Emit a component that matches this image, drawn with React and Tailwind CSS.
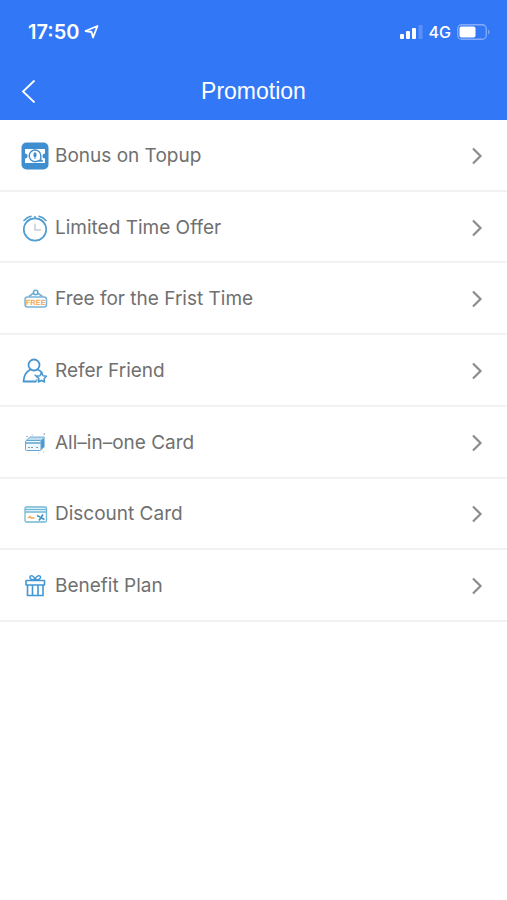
import React from "react";

const BLUE = "#3f8fd0";

function BonusIcon() {
  return (
    <svg viewBox="0 0 28 28" className="size-7" fill="none" aria-hidden="true">
      <rect x="0.5" y="0.5" width="27" height="27" rx="5" fill={BLUE} />
      <path d="M4 7H24V11.5A2.5 2.5 0 0 0 24 16.500V21H4V16.500A2.500 2.500 0 0 0 4 11.500Z" fill="#fff" />
      <path d="M16.500 19A5.800 5.800 0 1 1 19.800 14V17.500L17.500 18.800L22 19" stroke={BLUE} strokeWidth="1.400" />
      <rect x="12.500" y="11" width="3" height="4" rx="1" fill={BLUE} />
      <path d="M14 10V17" stroke={BLUE} strokeWidth="1" />
    </svg>
  );
}

function ClockIcon() {
  return (
    <svg viewBox="0 0 28 28" className="size-7" fill="none" stroke="#529dd2" strokeLinecap="round" aria-hidden="true">
      <circle cx="14" cy="15.500" r="11.200" strokeWidth="1.700" />
      <path d="M3 6.500Q6 3 10 2.200M25 6.500Q22 3 18 2.200M14 2.500V4" strokeWidth="1.600" />
      <path d="M5.500 7.500L10 4.500M22.500 7.500L18 4.500" strokeWidth="1.200" />
      <path d="M14 10.500V16H19.500" stroke="#c3ccd5" strokeWidth="1.500" />
    </svg>
  );
}

function FreeIcon() {
  return (
    <svg viewBox="0 0 28 28" className="size-7" fill="none" aria-hidden="true">
      <rect x="4" y="12" width="21.500" height="10" rx="2.500" stroke="#79b2d8" strokeWidth="1.500" />
      <path d="M8 11.500L14.500 6.500L21.500 11.500" stroke="#79b2d8" strokeWidth="1.700" />
      <circle cx="14.700" cy="7.500" r="2.200" fill="#fff" stroke="#65a8d4" strokeWidth="1.500" />
      <text x="14.700" y="20" textAnchor="middle" fontSize="7.500" fontWeight="700" textRendering="geometricPrecision" fill="#eba95b" className="font-['Liberation_Sans',sans-serif]">FREE</text>
    </svg>
  );
}

function FriendIcon() {
  return (
    <svg viewBox="0 0 28 28" className="size-7" fill="none" stroke="#4796d1" strokeLinejoin="round" strokeLinecap="round" aria-hidden="true">
      <circle cx="13" cy="8" r="5.500" strokeWidth="1.800" />
      <path d="M9.500 12.500C5.500 14.500 3 18 2.500 24.500H15M16.500 12.500C18.500 13.300 20 14.500 21 16" strokeWidth="1.800" />
      <path d="M20.500 15.500L22 18.700L25.500 19.200L23 21.700L23.600 25L20.500 23.500L17.400 25L18 21.700L15.500 19.200L19 18.700Z" strokeWidth="1.400" />
      <path d="M14 18L16 20M15 23H17" strokeWidth="1.200" />
    </svg>
  );
}

function CardsIcon() {
  return (
    <svg viewBox="0 0 28 28" className="size-7" fill="none" aria-hidden="true">
      <path d="M20 11.500L23.500 8.500V18L20 21Z" fill="#4a99d0" />
      <path d="M5 11.500L9 8H23.500L20 11.500Z" fill="#bcddf0" stroke="#75b2da" />
      <rect x="4.500" y="11.500" width="15.500" height="10" rx="1" fill="#eff8fc" stroke="#65a7d4" />
      <path d="M5 14H20" stroke="#75b2da" strokeWidth="1.800" />
      <path d="M7 18.500H13M15 18.500H18" stroke="#7f9bad" strokeDasharray="2 1" />
      <path d="M22 5H23M23.500 4V6M5 7.500H7M11 6H12M17 24H18M22 23H23" stroke="#b6bac8" />
    </svg>
  );
}

function DiscountIcon() {
  return (
    <svg viewBox="0 0 28 28" className="size-7" fill="none" aria-hidden="true">
      <rect x="4" y="7" width="21.500" height="15" rx="1.500" fill="#fff" stroke="#70b7d7" strokeWidth="1.300" />
      <path d="M4 9.500H25.500M4 12H25.500" stroke="#70b7d7" strokeWidth="1.300" />
      <path d="M7 18L9 16.500L10 18H13.500" stroke="#eba95b" strokeWidth="1.400" />
      <path d="M22 14.500L18 20.500M16 15.500L19 17M20.500 18L23.500 19.500" stroke="#4594c7" strokeWidth="1.700" />
    </svg>
  );
}

function GiftIcon() {
  return (
    <svg viewBox="0 0 28 28" className="size-7" fill="none" stroke="#4296d4" aria-hidden="true">
      <rect x="5" y="8.500" width="18.500" height="4.500" rx="0.500" strokeWidth="1.600" />
      <path d="M6.500 13V23.500H22V13M11.500 13V23M17 13V23" strokeWidth="1.600" />
      <path d="M14 8C10 8 8.500 6.500 9 4.800S13 3 14 8C15 3 19 3 19.500 4.800S18 8 14 8Z" strokeWidth="1.500" />
    </svg>
  );
}

const items = [
  { label: "Bonus on Topup", Icon: BonusIcon },
  { label: "Limited Time Offer", Icon: ClockIcon },
  { label: "Free for the Frist Time", Icon: FreeIcon },
  { label: "Refer Friend", Icon: FriendIcon },
  { label: "All–in–one Card", Icon: CardsIcon },
  { label: "Discount Card", Icon: DiscountIcon },
  { label: "Benefit Plan", Icon: GiftIcon },
];

function StatusBar() {
  return (
    <div className="flex h-16 items-center justify-between pr-4 pl-7 font-['Inter',sans-serif]">
      <div className="flex items-center gap-1">
        <span className="text-[20px] leading-6 font-semibold">17:50</span>
        <svg viewBox="0 0 16 16" className="size-4" fill="none" stroke="currentColor" strokeWidth="1.800" strokeLinejoin="round" aria-hidden="true">
          <path d="M14.500 2L10 13.500L8.500 8L2.500 7Z" />
        </svg>
      </div>
      <div className="flex items-center gap-1.5">
        <svg viewBox="0 0 24 14" className="h-3.5 w-6" fill="currentColor" aria-hidden="true">
          <rect x="1" y="9" width="4" height="5" rx="1" />
          <rect x="7" y="6" width="4" height="8" rx="1" />
          <rect x="13" y="3" width="4" height="11" rx="1" />
          <rect x="19.500" y="0" width="4" height="14" rx="1" opacity="0.200" />
        </svg>
        <span className="text-[16px] leading-5 font-medium">4G</span>
        <svg viewBox="0 0 34 16" className="h-4 w-[34px]" fill="none" aria-hidden="true">
          <rect x="0.750" y="0.750" width="28.500" height="14.500" rx="4" stroke="#fff" strokeWidth="1.300" opacity="0.400" />
          <rect x="2.500" y="2.500" width="16" height="11" rx="2" fill="#fff" />
          <path d="M31 5.500Q34 8 31 10.500Z" fill="#fff" opacity="0.400" />
        </svg>
      </div>
    </div>
  );
}

export default function App() {
  return (
    <div className="min-h-screen bg-white font-['Inter',sans-serif]">
      <header className="h-[120px] bg-[#3277f6] text-white">
        <StatusBar />
        <div className="grid h-[54px] grid-cols-[56px_1fr_56px] items-center">
          <button type="button" aria-label="Back" className="flex h-full items-center pl-5">
            <svg viewBox="0 0 16 24" className="h-6 w-4" fill="none" stroke="currentColor" strokeWidth="1.800" aria-hidden="true">
              <path d="M14.500 1.500L3 12.500L14.500 23.500" />
            </svg>
          </button>
          <h1 className="text-center font-['Liberation_Sans',sans-serif] text-[23px] leading-7">Promotion</h1>
        </div>
      </header>
      <ul className="grid h-[502px] auto-rows-fr">
        {items.map(({ label, Icon }) => (
          <li key={label} className="border-b-2 border-[#f2f2f2]">
            <button type="button" className="flex size-full items-center pt-0.5 pr-6 pl-[21px] text-left text-[#707070]">
              <Icon />
              <span className="ml-1.5 grow text-[19px] leading-6">{label}</span>
              <svg viewBox="0 0 12 18" className="h-[18px] w-3" fill="none" stroke="#8c8c8c" strokeWidth="2.200" aria-hidden="true">
                <path d="M2 1.500L9.500 9L2 16.500" />
              </svg>
            </button>
          </li>
        ))}
      </ul>
    </div>
  );
}
